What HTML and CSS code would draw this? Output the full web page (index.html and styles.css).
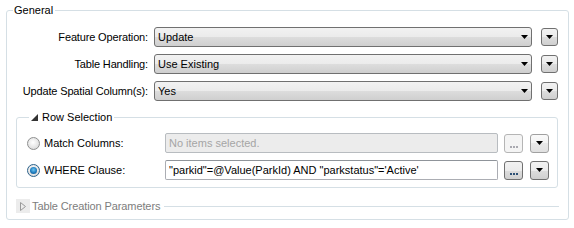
FILE: index.html
```html
<!DOCTYPE html>
<html>
<head>
<meta charset="utf-8">
<link rel="stylesheet" href="styles.css">
</head>
<body>
<div class="panel">
  <fieldset class="group">
    <legend class="title">General</legend>
    <div class="form">
      <label class="lbl">Feature Operation:</label>
      <div class="combo"><span>Update</span><svg class="arr" width="7" height="4" viewBox="0 0 7 4"><polygon points="0,0 7,0 3.5,4" fill="#000"/></svg></div>
      <div class="mini"><svg width="7" height="4" viewBox="0 0 7 4"><polygon points="0,0 7,0 3.5,4" fill="#000"/></svg></div>

      <label class="lbl">Table Handling:</label>
      <div class="combo"><span>Use Existing</span><svg class="arr" width="7" height="4" viewBox="0 0 7 4"><polygon points="0,0 7,0 3.5,4" fill="#000"/></svg></div>
      <div class="mini"><svg width="7" height="4" viewBox="0 0 7 4"><polygon points="0,0 7,0 3.5,4" fill="#000"/></svg></div>

      <label class="lbl">Update Spatial Column(s):</label>
      <div class="combo"><span>Yes</span><svg class="arr" width="7" height="4" viewBox="0 0 7 4"><polygon points="0,0 7,0 3.5,4" fill="#000"/></svg></div>
      <div class="mini"><svg width="7" height="4" viewBox="0 0 7 4"><polygon points="0,0 7,0 3.5,4" fill="#000"/></svg></div>
    </div>

    <fieldset class="sub">
      <legend class="title sub-title"><svg class="open" width="7" height="7" viewBox="0 0 7 7"><polygon points="7,0 7,7 0,7" fill="#333"/></svg><span>Row Selection</span></legend>
      <div class="row">
        <span class="radio"></span>
        <span class="rlbl">Match Columns:</span>
        <div class="field disabled">No items selected.</div>
        <div class="dots dis"><span></span><span></span><span></span></div>
        <div class="mini light"><svg width="7" height="4" viewBox="0 0 7 4"><polygon points="0,0 7,0 3.5,4" fill="#000"/></svg></div>
      </div>
      <div class="row">
        <span class="radio on"><span class="dot"></span></span>
        <span class="rlbl">WHERE Clause:</span>
        <div class="field">"parkid"=@Value(ParkId) AND "parkstatus"='Active'</div>
        <div class="dots"><span></span><span></span><span></span></div>
        <div class="mini dd"><svg width="7" height="4" viewBox="0 0 7 4"><polygon points="0,0 7,0 3.5,4" fill="#000"/></svg></div>
      </div>
    </fieldset>

    <div class="collapsed">
      <span class="exp"><svg width="6" height="9" viewBox="0 0 6 9"><polygon points="0.5,0.5 5.5,4.5 0.5,8.5" fill="none" stroke="#9a9a9a" stroke-width="1"/></svg></span>
      <span class="ctext">Table Creation Parameters</span>
      <span class="cline"></span>
    </div>
  </fieldset>
</div>
</body>
</html>
```

FILE: styles.css
```css
* { box-sizing: border-box; }
html, body { margin: 0; padding: 0; background: #fff; }
body {
  font-family: "Liberation Sans", Arial, sans-serif;
  font-size: 11px;
  color: #000;
  width: 574px;
  height: 228px;
  overflow: hidden;
}
.panel { padding: 3px 5px 0 6px; }
.group {
  margin: 0;
  width: 563px;
  padding: 10px 0 6px 0;
  border: 1px solid #d5dfe5;
  border-radius: 3px;
}
.title {
  margin-left: 6px;
  padding: 0 2px 0 1px;
  line-height: 14px;
  height: 14px;
}
.form {
  display: grid;
  grid-template-columns: 141px 384px 26px;
  row-gap: 7px;
  align-items: center;
}
.lbl { text-align: right; white-space: nowrap; letter-spacing: -0.15px; }
.combo {
  margin-left: 6px;
  height: 20px;
  border: 1px solid #707070;
  border-radius: 3px;
  background: linear-gradient(#f2f2f2 0%, #ebebeb 50%, #dddddd 50%, #cfcfcf 100%);
  display: flex;
  align-items: center;
  justify-content: space-between;
  padding: 0 3px 0 3px;
}
.mini {
  margin-left: 9px;
  width: 17px;
  height: 18px;
  border: 1px solid #707070;
  border-radius: 3px;
  background: linear-gradient(#f2f2f2 0%, #ebebeb 50%, #dddddd 50%, #cfcfcf 100%);
  display: flex;
  align-items: center;
  justify-content: center;
}
.sub {
  margin: 9px 10px 0 9px;
  padding: 9px 0 7px 10px;
  border: 1px solid #d5dfe5;
  border-radius: 3px;
}
.sub-title {
  margin-left: 2px;
  padding: 0 2px 0 1px;
  display: flex;
  align-items: center;
}
.open { margin: 1px 4px 0 1px; }
.row {
  display: flex;
  align-items: center;
  height: 20px;
}
.row + .row { margin-top: 7px; }
.radio {
  width: 13px;
  height: 13px;
  border-radius: 50%;
  border: 1px solid #8e8f8f;
  background: radial-gradient(circle at 45% 40%, #ffffff 0%, #e6e6e6 55%, #cfcfcf 100%);
  display: flex;
  align-items: center;
  justify-content: center;
  flex: none;
}
.radio.on { border-color: #2c628b; }
.dot {
  width: 7px;
  height: 7px;
  border-radius: 50%;
  background: radial-gradient(circle at 50% 40%, #6cc6f2 0%, #1f7bbd 55%, #154a76 100%);
}
.rlbl { margin-left: 4px; width: 116px; white-space: nowrap; }
.field {
  margin-left: 5px;
  width: 333px;
  height: 20px;
  border: 1px solid #abadb3;
  border-top-color: #8f949a;
  border-radius: 2px;
  background: #fff;
  padding: 0 3px;
  line-height: 18px;
  white-space: nowrap;
  overflow: hidden;
}
.field.disabled {
  border-color: #b8bcc0;
  background: #ececec;
  color: #a5a5a5;
}
.dots {
  margin-left: 6px;
  width: 19px;
  height: 19px;
  border: 1px solid #707070;
  border-radius: 3px;
  background: linear-gradient(#f2f2f2 0%, #ebebeb 50%, #dddddd 50%, #cfcfcf 100%);
  display: flex;
  align-items: flex-end;
  justify-content: center;
  gap: 1px;
  padding-bottom: 4px;
}
.dots span { width: 2px; height: 2px; background: #2b4f74; }
.dots.dis { border-color: #b5b5b5; background: #f4f4f4; }
.dots.dis span { background: #a9a9b0; }
.mini.light, .mini.dd { margin-left: 7px; width: 19px; height: 19px; }
.mini.light { border-color: #a0a0a0; background: linear-gradient(#fafafa 0%, #f2f2f2 50%, #e8e8e8 50%, #e0e0e0 100%); }
.collapsed {
  margin: 11px 0 0 9px;
  height: 14px;
  display: flex;
  align-items: center;
}
.exp {
  width: 14px;
  height: 14px;
  background: #ececec;
  display: flex;
  align-items: center;
  justify-content: center;
}
.ctext { margin-left: 2px; color: #7d7d7d; white-space: nowrap; letter-spacing: -0.1px; }
.cline { flex: 1; height: 1px; background: #d5dfe5; margin: 0 9px 0 4px; }
```
